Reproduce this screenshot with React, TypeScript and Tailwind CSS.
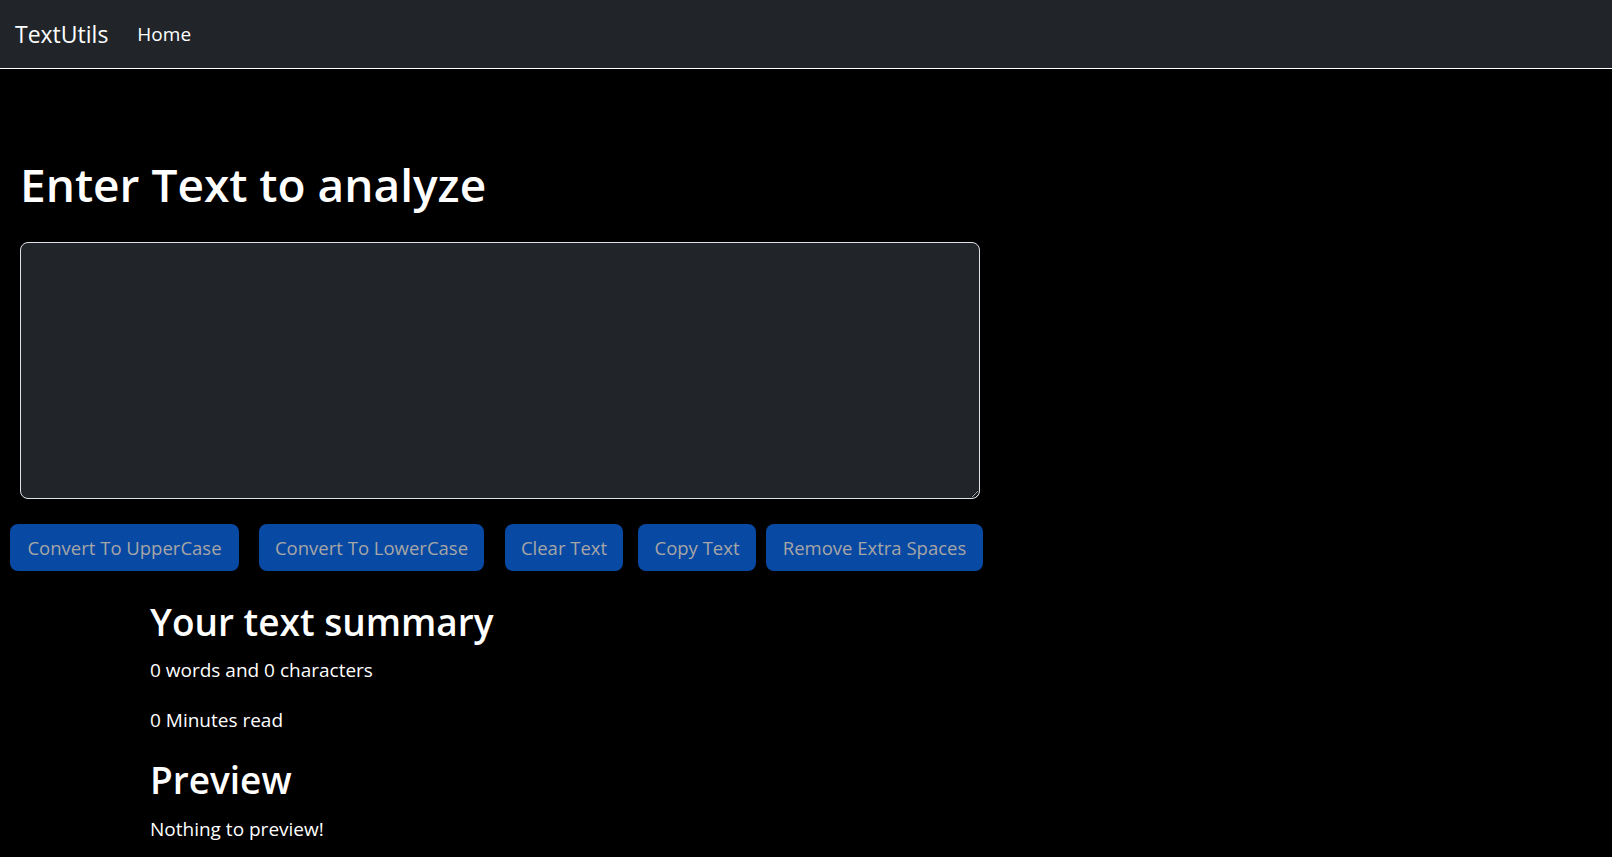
import React from "react";

const buttons = [
  { label: "Convert To UpperCase", cls: "w-[229px] ml-[10px]" },
  { label: "Convert To LowerCase", cls: "w-[225px] ml-[20px]" },
  { label: "Clear Text", cls: "w-[118px] ml-[21px]" },
  { label: "Copy Text", cls: "w-[118px] ml-[15px]" },
  { label: "Remove Extra Spaces", cls: "w-[217px] ml-[10px]" },
];

export default function App() {
  return (
    <div className="min-h-screen bg-black text-white font-['Open_Sans',sans-serif]">
      <nav className="h-[69px] bg-[#212529] border-b border-white flex items-center px-[15px]">
        <span className="text-[23px] leading-none mr-[29px]">TextUtils</span>
        <span className="text-[19px] leading-none">Home</span>
      </nav>

      <div className="pl-[20px]">
        <h1 className="mt-[85px] text-[46px] leading-[60px] font-semibold">Enter Text to analyze</h1>
        <textarea className="block mt-[28px] w-[960px] h-[257px] bg-[#212529] border border-[#dee2e6] rounded-[8px] text-white p-3 outline-none" />
      </div>

      <div className="flex mt-[25px]">
        {buttons.map((b) => (
          <button
            key={b.label}
            disabled
            className={`h-[47px] rounded-[8px] bg-[#0849a4] text-[#a6a6a6] text-[18.5px] flex items-center justify-center ${b.cls}`}
          >
            {b.label}
          </button>
        ))}
      </div>

      <div className="pl-[150px] pb-4">
        <h2 className="mt-[29px] text-[37px] leading-[43px] font-semibold">Your text summary</h2>
        <p className="mt-[14px] text-[19px] leading-[27px]">0 words and 0 characters</p>
        <p className="mt-[23px] text-[19px] leading-[27px]">0 Minutes read</p>
        <h2 className="mt-[24px] text-[37px] leading-[43px] font-semibold">Preview</h2>
        <p className="mt-[15px] text-[19px] leading-[27px]">Nothing to preview!</p>
      </div>
    </div>
  );
}
